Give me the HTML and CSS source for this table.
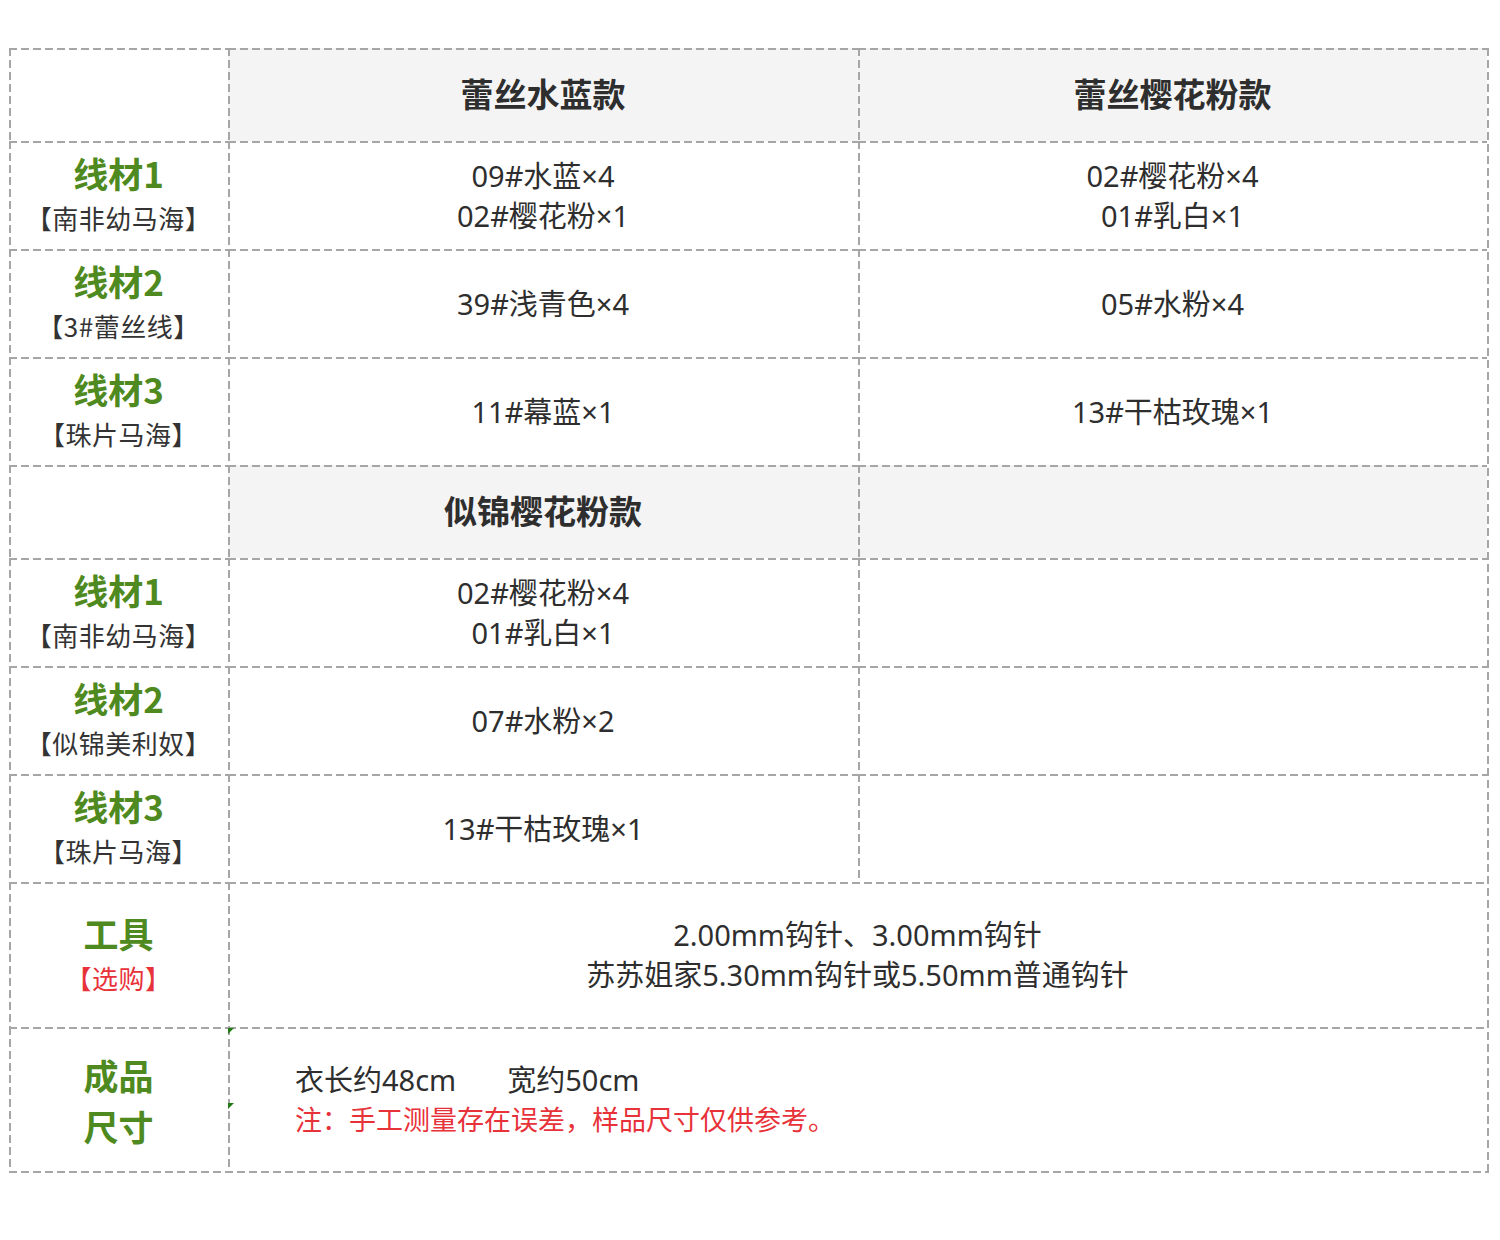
FILE: index.html
```html
<!DOCTYPE html>
<html lang="zh-CN">
<head>
<meta charset="utf-8">
<title>线材表</title>
<link rel="stylesheet" href="styles.css">
</head>
<body>
<div class="sheet">
  <div class="cell"></div>
  <div class="cell head">蕾丝水蓝款</div>
  <div class="cell head">蕾丝樱花粉款</div>

  <div class="cell label"><div class="g">线材1</div><div class="sub">【南非幼马海】</div></div>
  <div class="cell val">09#水蓝×4<br>02#樱花粉×1</div>
  <div class="cell val">02#樱花粉×4<br>01#乳白×1</div>

  <div class="cell label"><div class="g">线材2</div><div class="sub">【3#蕾丝线】</div></div>
  <div class="cell val">39#浅青色×4</div>
  <div class="cell val">05#水粉×4</div>

  <div class="cell label"><div class="g">线材3</div><div class="sub">【珠片马海】</div></div>
  <div class="cell val">11#幕蓝×1</div>
  <div class="cell val">13#干枯玫瑰×1</div>

  <div class="cell"></div>
  <div class="cell head">似锦樱花粉款</div>
  <div class="cell head"></div>

  <div class="cell label"><div class="g">线材1</div><div class="sub">【南非幼马海】</div></div>
  <div class="cell val">02#樱花粉×4<br>01#乳白×1</div>
  <div class="cell val"></div>

  <div class="cell label"><div class="g">线材2</div><div class="sub">【似锦美利奴】</div></div>
  <div class="cell val">07#水粉×2</div>
  <div class="cell val"></div>

  <div class="cell label"><div class="g">线材3</div><div class="sub">【珠片马海】</div></div>
  <div class="cell val">13#干枯玫瑰×1</div>
  <div class="cell val"></div>

  <div class="cell label"><div class="g">工具</div><div class="sub red">【选购】</div></div>
  <div class="cell val wide">2.00mm钩针、3.00mm钩针<br>苏苏姐家5.30mm钩针或5.50mm普通钩针</div>

  <div class="cell label"><div class="g big">成品<br>尺寸</div></div>
  <div class="cell wide size">
    <div class="dims"><span>衣长约48cm</span><span>宽约50cm</span></div>
    <div class="note">注：手工测量存在误差，样品尺寸仅供参考。</div>
  </div>

  <span class="tri t1"></span>
  <span class="tri t2"></span>
</div>
</body>
</html>
```

FILE: styles.css
```css
html, body {
  margin: 0;
  padding: 0;
  background: #ffffff;
}

body {
  font-family: "Noto Sans", "Noto Sans CJK SC", sans-serif;
  color: #333333;
}

.sheet {
  position: relative;
  margin: 48px 0 0 9px;
  display: grid;
  grid-template-columns: 219px 630px 629px;
  grid-template-rows: 93px 108px 108px 108px 93px 108px 108px 108px 145px 144px;
  padding: 0 2px 2px 0;
  box-sizing: content-box;
  width: 1478px;
  background:
    repeating-linear-gradient(to bottom, #a6a6a6 0 8px, transparent 8px 12px) right top / 2px 100% no-repeat,
    repeating-linear-gradient(to right, #a6a6a6 0 8px, transparent 8px 12px) left bottom / 100% 2px no-repeat;
}

.cell {
  display: flex;
  flex-direction: column;
  align-items: center;
  justify-content: center;
  text-align: center;
  background:
    repeating-linear-gradient(to right, #a6a6a6 0 8px, transparent 8px 12px) left top / 100% 2px no-repeat,
    repeating-linear-gradient(to bottom, #a6a6a6 0 8px, transparent 8px 12px) left top / 2px 100% no-repeat;
  background-color: #ffffff;
}

.head {
  background-color: #f4f4f4;
  font-family: "Noto Sans CJK SC", sans-serif;
  font-size: 33px;
  font-weight: 700;
  color: #2e2e2e;
  padding-bottom: 4px;
}

.val {
  font-size: 29px;
  line-height: 40px;
  color: #2e2e2e;
  padding-top: 1px;
}

.wide {
  grid-column: 2 / 4;
}

.label {
  padding-top: 2px;
}

.g {
  font-family: "Noto Sans CJK SC", sans-serif;
  font-size: 35px;
  font-weight: 700;
  color: #4f8a21;
  line-height: 44px;
}

.g.big {
  line-height: 51px;
}

.sub {
  font-family: "Noto Sans CJK SC", sans-serif;
  font-size: 26px;
  line-height: 46px;
  color: #333333;
  letter-spacing: 0.5px;
}

.sub.red {
  color: #e8323a;
}

.size {
  align-items: flex-start;
  text-align: left;
  padding-left: 67px;
  padding-top: 0;
}

.dims {
  font-size: 29px;
  line-height: 40px;
  color: #2e2e2e;
  display: flex;
  gap: 51px;
}

.note {
  font-family: "Noto Sans CJK SC", sans-serif;
  font-size: 27px;
  line-height: 38px;
  color: #e8323a;
}

.tri {
  position: absolute;
  width: 0;
  height: 0;
  border-top: 6px solid #1f7a12;
  border-right: 6px solid transparent;
  left: 219px;
}

.t1 { top: 980px; }
.t2 { top: 1055px; }
```
